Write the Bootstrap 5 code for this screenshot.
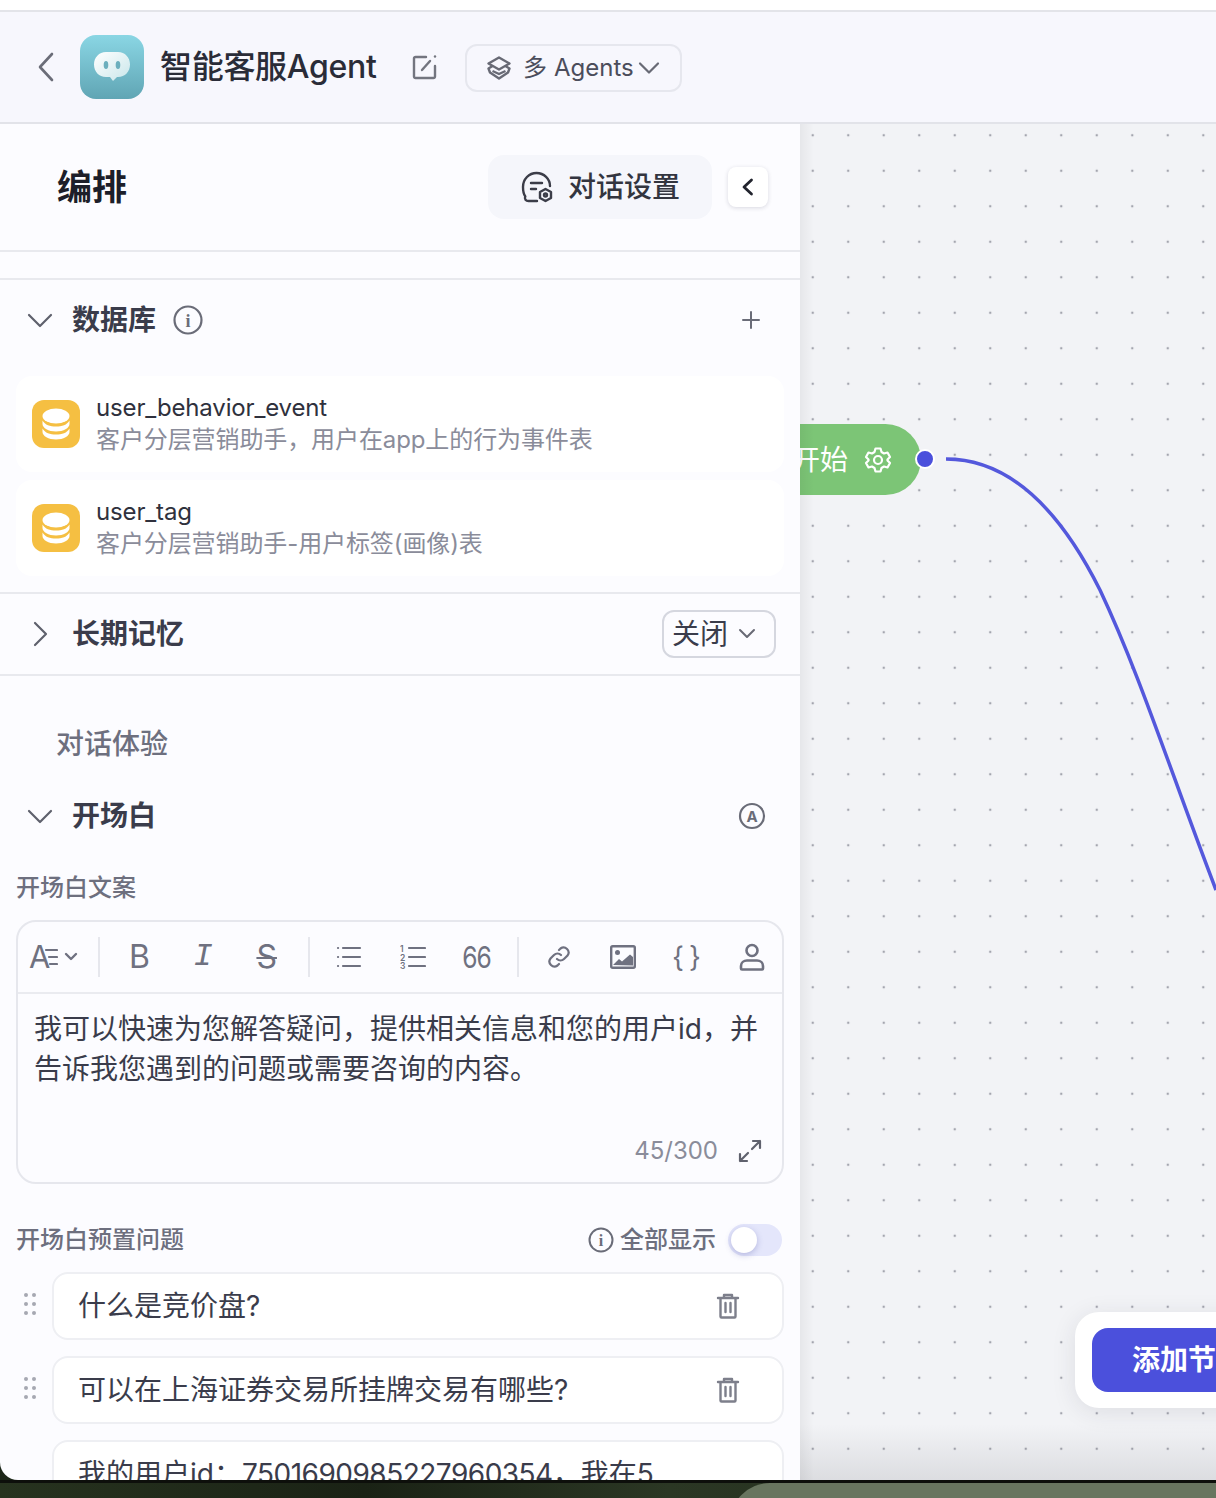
<!DOCTYPE html>
<html lang="zh-CN">

<head>
    <meta charset="UTF-8">
    <meta name="viewport" content="width=device-width, initial-scale=1.0">
    <title>智能客服Agent</title>
    <link href="https://cdn.jsdelivr.net/npm/bootstrap@5.3.0/dist/css/bootstrap.min.css" rel="stylesheet">
    <style>
        body {
            width: 1216px;
            height: 1498px;
            overflow: hidden;
            background: #1c2618;
            font-family: Inter, "Noto Sans CJK SC", sans-serif;
            color: #2c2e3a;
        }

        svg {
            display: block;
            flex: none;
        }

        .top-gap {
            height: 12px;
            background: #fff;
            border-bottom: 2px solid #e3e4e9;
        }

        .app-head {
            height: 112px;
            background: #f7f7fd;
            border-bottom: 2px solid #e2e3e9;
            padding-left: 36px;
        }

        .app-logo {
            width: 64px;
            height: 64px;
            border-radius: 16px;
            background: linear-gradient(#8ad6e4, #60a5b4);
            margin-left: 24px;
        }

        .app-name {
            font-size: 32px;
            font-weight: 500;
            line-height: 40px;
            letter-spacing: -.3px;
            color: #2a2c38;
            margin-left: 16px;
            width: 216px;
            white-space: nowrap;
        }

        .edit-icon {
            margin-left: 35px;
        }

        .mode-btn {
            width: 217px;
            height: 48px;
            border: 2px solid #e6e7ee;
            border-radius: 12px;
            margin: 2px 0 0 26px;
            padding-left: 19px;
            font-size: 24px;
            color: #4b4d5b;
        }

        .mode-one {
            margin-left: 11px;
        }

        .mode-two {
            margin-left: 7px;
        }

        .work-area {
            height: 1356px;
        }

        .side-panel {
            width: 800px;
            background: #fcfcff;
            overflow: hidden;
            border-bottom-left-radius: 18px;
        }

        .panel-head {
            height: 128px;
            border-bottom: 2px solid #e8e9ee;
            padding: 0 32px 0 57px;
            margin-bottom: 26px;
        }

        .panel-title {
            font-size: 35px;
            font-weight: 700;
            color: #1d1f2a;
        }

        .chat-set {
            width: 224px;
            height: 64px;
            border-radius: 16px;
            background: #f5f6fb;
            font-size: 28px;
            font-weight: 500;
            color: #33353f;
            gap: 14px;
        }

        .fold-btn {
            width: 40px;
            height: 40px;
            border-radius: 8px;
            background: #fff;
            box-shadow: 0 1px 4px rgba(30, 32, 60, .16);
            margin-left: 16px;
        }

        .sec-rule {
            border-top: 2px solid #e8e9ee;
        }

        .sec-row {
            height: 80px;
            padding: 0 24px 0 26px;
        }

        .open-row {
            height: 64px;
        }

        .sec-name {
            font-size: 28px;
            font-weight: 600;
            line-height: 40px;
            color: #3a3c4b;
            margin-left: 18px;
        }

        .info-gap {
            margin-left: 17px;
        }

        .plus-end {
            margin-left: auto;
            margin-right: 15px;
        }

        .auto-end {
            margin-left: auto;
            margin-right: 10px;
        }

        .db-list {
            padding: 16px 16px 16px;
        }

        .db-item {
            height: 96px;
            border-radius: 16px;
            background: #fff;
            padding-left: 16px;
            margin-bottom: 8px;
        }

        .db-item:last-child {
            margin-bottom: 0;
        }

        .db-icon {
            width: 48px;
            height: 48px;
            border-radius: 12px;
            background: #f5bf42;
            margin-right: 16px;
        }

        .db-name {
            font-size: 24px;
            line-height: 32px;
            letter-spacing: -.15px;
            color: #2f313d;
        }

        .db-desc {
            font-size: 24px;
            line-height: 32px;
            letter-spacing: -.1px;
            color: #8a8c9a;
        }

        .memory-select {
            width: 114px;
            height: 48px;
            border: 2px solid #d5d7df;
            border-radius: 12px;
            font-size: 28px;
            color: #3a3c4b;
            padding-left: 8px;
            gap: 10px;
        }

        .group-label {
            font-size: 28px;
            font-weight: 500;
            line-height: 40px;
            color: #6d6f7e;
            margin: 48px 0 20px 56px;
        }

        .field-label {
            font-size: 24px;
            font-weight: 500;
            line-height: 32px;
            color: #6d6f7e;
        }

        .label-gap {
            margin-top: 24px;
        }

        .editor-box {
            height: 264px;
            margin: 16px 16px 0;
            border: 2px solid #e6e7ed;
            border-radius: 20px;
        }

        .tool-row {
            height: 72px;
            border-bottom: 2px solid #eaebf0;
            color: #6f7180;
        }

        .tool-btn {
            width: 64px;
            height: 40px;
            font-size: 32px;
            line-height: 40px;
            color: #6f7180;
        }

        .tool-btn.last-tool {
            width: 60px;
            margin-left: 4px;
        }

        .tool-font {
            width: 80px;
            height: 40px;
            padding-left: 11px;
            font-size: 31px;
            line-height: 40px;
        }

        .tool-font svg:first-of-type {
            margin: 0 6px 0 -6px;
        }

        .tool-line {
            width: 2px;
            height: 40px;
            background: #e6e7ed;
            margin: 0 8px 0 9px;
        }

        .tool-line.first-line {
            margin: 0 8px 0 0;
        }

        .italic-glyph {
            font-family: "Liberation Mono", monospace;
            font-style: italic;
        }

        .strike-glyph {
            text-decoration: line-through;
            text-decoration-thickness: 2px;
        }

        .quote-glyph {
            display: inline-block;
            font-size: 30px;
            letter-spacing: -1px;
            transform: scaleX(.82);
        }

        .brace-glyph {
            font-size: 28px;
            letter-spacing: 5px;
            padding-left: 5px;
        }

        .editor-text {
            padding: 15px 16px 0;
            height: 137px;
            font-size: 28px;
            line-height: 40px;
            color: #3a3c4b;
        }

        .editor-foot {
            height: 40px;
            padding-right: 20px;
            font-size: 24px;
            color: #8a8c9a;
            gap: 20px;
        }

        .preset-head {
            height: 32px;
            margin: 40px 18px 0 16px;
        }

        .show-all {
            font-size: 24px;
            font-weight: 500;
            color: #6d6f7e;
            gap: 6px;
        }

        .mini-toggle {
            width: 54px;
            height: 32px;
            border-radius: 16px;
            background: #e4e6fb;
            margin-left: 12px;
            padding-left: 3px;
        }

        .mini-knob {
            width: 26px;
            height: 26px;
            border-radius: 50%;
            background: #fff;
            box-shadow: 0 2px 6px rgba(70, 74, 160, .3);
        }

        .preset-list {
            margin-top: 16px;
            padding: 0 16px;
            gap: 16px;
        }

        .preset-row {
            gap: 8px;
        }

        .drag-dots {
            width: 28px;
            padding-top: 20px;
        }

        .preset-item {
            height: 68px;
            border: 2px solid #eeeff3;
            border-radius: 16px;
            background: #fff;
            padding: 0 42px 0 24px;
            font-size: 28px;
            line-height: 40px;
            color: #3a3c4b;
        }

        .preset-cut {
            height: 100px;
            padding-top: 12px;
            align-items: flex-start !important;
        }

        .id-digits {
            letter-spacing: -.5px;
        }

        .flow-canvas {
            background-color: #f2f3f6;
            background-image: radial-gradient(circle, #a3a5ae 1.2px, transparent 1.6px);
            background-size: 35.5px 35.5px;
            background-position: -5px -6.5px;
            overflow: hidden;
        }

        .canvas-shade {
            background: linear-gradient(90deg, rgba(0, 0, 0, .05), transparent 14px),
                linear-gradient(transparent 1300px, rgba(60, 62, 70, .12));
            pointer-events: none;
        }

        .flow-lines {
            left: 0;
            top: 0;
        }

        .start-node {
            left: -40px;
            top: 300px;
            width: 161px;
            height: 71px;
            border-radius: 0 36px 36px 0;
            background: #7cc576;
            color: #fff;
            font-size: 28px;
            padding-left: 32px;
            gap: 16px;
            white-space: nowrap;
        }

        .dot-port {
            left: 155px;
            top: 25px;
        }

        .add-wrap {
            left: 275px;
            top: 1188px;
            width: 200px;
            height: 96px;
            background: #fff;
            border-radius: 24px;
            box-shadow: 0 4px 24px rgba(40, 42, 60, .1);
            padding: 16px 0 16px 17px;
        }

        .add-btn {
            width: 183px;
            height: 64px;
            border-radius: 16px 0 0 16px;
            background: #4b50dc;
            color: #fff;
            font-size: 28px;
            font-weight: 600;
            padding-left: 40px;
            white-space: nowrap;
        }

        .desk-strip {
            height: 18px;
            border-top: 3px solid #0d0f0b;
            background: linear-gradient(90deg, #27331f, #1a2215 30%, #2b3724 55%, #1d2618);
            overflow: hidden;
        }

        .desk-shape {
            width: 486px;
            height: 60px;
            margin-left: 730px;
            background: #68755f;
            border-radius: 40px 0 0 0;
        }
    </style>
</head>

<body>

    <div class="top-gap"></div>

    <header class="app-head d-flex align-items-center">
        <svg width="20" height="32" viewBox="0 0 20 32" fill="none" stroke="#6b6d78" stroke-width="2.6" stroke-linecap="round" stroke-linejoin="round"><path d="M16 3 4 16l12 13" /></svg>
        <div class="app-logo d-flex align-items-center justify-content-center">
            <svg width="40" height="36" viewBox="0 0 40 36">
                <defs>
                    <linearGradient id="bubble" x1="0" y1="0" x2="1" y2="1">
                        <stop offset="0" stop-color="#ffffff" />
                        <stop offset="1" stop-color="#c8e6ea" />
                    </linearGradient>
                </defs>
                <path d="M14 3h12c7 0 12 5.5 12 12.5S33 28 26 28h-1l-4 4-3-4h-4C7 28 2 22.5 2 15.5S7 3 14 3z" fill="url(#bubble)" />
                <ellipse cx="14" cy="16" rx="2.3" ry="4" fill="#6bafbd" />
                <ellipse cx="26" cy="16" rx="2.3" ry="4" fill="#6bafbd" />
            </svg>
        </div>
        <div class="app-name">智能客服Agent</div>
        <svg class="edit-icon" width="28" height="28" viewBox="0 0 28 28" fill="none" stroke="#73757f" stroke-width="2.4" stroke-linecap="round" stroke-linejoin="round"><path d="M15 4H4.500A1.500 1.500 0 0 0 3 5.500v18A1.500 1.500 0 0 0 4.500 25h18a1.500 1.500 0 0 0 1.500-1.500V13" /><path d="m11 17 8-9" /><path d="M24 3.500v.1" /></svg>
        <div class="mode-btn d-flex align-items-center">
            <svg width="26" height="26" viewBox="0 0 26 26" fill="none" stroke="#686a75" stroke-width="2.4" stroke-linejoin="round"><path d="M13 2.500 23.500 8.500 13 14.500 2.500 8.500z" /><path d="M6.500 11 2.500 13.500 4 17.500 13 23.500 22 17.500 23.500 13.500 19.500 11" /><path d="M6.500 16 13 19 19.500 16" /></svg>
            <span class="mode-one">多</span>
            <span class="mode-two">Agents</span>
            <svg class="ms-1" width="22" height="14" viewBox="0 0 22 14" fill="none" stroke="#686a75" stroke-width="2.2" stroke-linecap="round" stroke-linejoin="round"><path d="m2 2.500 9 9 9-9" /></svg>
        </div>
    </header>

    <div class="work-area d-flex">
        <aside class="side-panel">
            <div class="panel-head d-flex align-items-center">
                <div class="panel-title me-auto">编排</div>
                <div class="chat-set d-flex align-items-center justify-content-center">
                    <svg width="34" height="34" viewBox="0 0 34 34" fill="none" stroke="#3b3d48" stroke-width="2.4" stroke-linecap="round" stroke-linejoin="round"><path d="M17 31H8.500C6 31 4 29 5.300 26.500 3.500 24 3 21 3 17 3 9 9 3 16.500 3S30 9 30 16" /><path d="M11 13h11M11 19h5" /><path d="m25.500 19 5.500 3v6l-5.500 3-5.500-3v-6z" /><circle cx="25.500" cy="25" r="1.500" /></svg>
                    <span>对话设置</span>
                </div>
                <div class="fold-btn d-flex align-items-center justify-content-center">
                    <svg width="16" height="20" viewBox="0 0 16 20" fill="none" stroke="#22242e" stroke-width="2.8" stroke-linecap="round" stroke-linejoin="round"><path d="M11.500 3 4 10l7.500 7" /></svg>
                </div>
            </div>

            <section class="sec-rule">
                <div class="sec-row d-flex align-items-center">
                    <svg width="28" height="16" viewBox="0 0 28 16" fill="none" stroke="#5f616d" stroke-width="2.2" stroke-linecap="round" stroke-linejoin="round"><path d="m3 3 11 11L25 3" /></svg>
                    <span class="sec-name">数据库</span>
                    <svg class="info-gap" width="30" height="30" viewBox="0 0 30 30" fill="none" stroke="#6a6c78" stroke-width="2.2"><circle cx="15" cy="15" r="13.500" /><text x="15" y="21.500" text-anchor="middle" font-family="Liberation Serif, serif" font-size="18" font-weight="700" fill="#6a6c78" stroke="none">i</text></svg>
                    <svg class="plus-end" width="20" height="20" viewBox="0 0 20 20" fill="none" stroke="#6a6c78" stroke-width="2" stroke-linecap="round"><path d="M10 2v16M2 10h16" /></svg>
                </div>
                <div class="db-list">
                    <div class="db-item d-flex align-items-center">
                        <div class="db-icon d-flex align-items-center justify-content-center">
                            <svg width="30" height="32" viewBox="0 0 30 32" fill="#fff"><ellipse cx="15" cy="8" rx="13.500" ry="7.500" /><path d="M1.500 12.500C4 17 9 18.500 15 18.500s11-1.500 13.500-6v3.500c0 4-6 7.500-13.500 7.500S1.500 20 1.500 16z" /><path d="M1.500 20.500C4 25 9 26.500 15 26.500s11-1.500 13.500-6V24c0 4-6 7.500-13.500 7.500S1.500 28 1.500 24z" /></svg>
                        </div>
                        <div>
                            <div class="db-name">user_behavior_event</div>
                            <div class="db-desc">客户分层营销助手，用户在app上的行为事件表</div>
                        </div>
                    </div>
                    <div class="db-item d-flex align-items-center">
                        <div class="db-icon d-flex align-items-center justify-content-center">
                            <svg width="30" height="32" viewBox="0 0 30 32" fill="#fff"><ellipse cx="15" cy="8" rx="13.500" ry="7.500" /><path d="M1.500 12.500C4 17 9 18.500 15 18.500s11-1.500 13.500-6v3.500c0 4-6 7.500-13.500 7.500S1.500 20 1.500 16z" /><path d="M1.500 20.500C4 25 9 26.500 15 26.500s11-1.500 13.500-6V24c0 4-6 7.500-13.500 7.500S1.500 28 1.500 24z" /></svg>
                        </div>
                        <div>
                            <div class="db-name">user_tag</div>
                            <div class="db-desc">客户分层营销助手-用户标签(画像)表</div>
                        </div>
                    </div>
                </div>
            </section>

            <section class="sec-rule">
                <div class="sec-row d-flex align-items-center">
                    <svg width="28" height="28" viewBox="0 0 28 28" fill="none" stroke="#5f616d" stroke-width="2.2" stroke-linecap="round" stroke-linejoin="round"><path d="m9 3 11 11L9 25" /></svg>
                    <span class="sec-name">长期记忆</span>
                    <div class="memory-select d-flex align-items-center ms-auto">
                        <span>关闭</span>
                        <svg width="18" height="12" viewBox="0 0 18 12" fill="none" stroke="#686a75" stroke-width="2" stroke-linecap="round" stroke-linejoin="round"><path d="m2 2 7 7 7-7" /></svg>
                    </div>
                </div>
            </section>

            <section class="sec-rule">
                <div class="group-label">对话体验</div>
                <div class="d-flex align-items-center sec-row open-row">
                    <svg width="28" height="16" viewBox="0 0 28 16" fill="none" stroke="#5f616d" stroke-width="2.2" stroke-linecap="round" stroke-linejoin="round"><path d="m3 3 11 11L25 3" /></svg>
                    <span class="sec-name">开场白</span>
                    <svg class="auto-end" width="28" height="28" viewBox="0 0 28 28" fill="none" stroke="#6a6c78" stroke-width="2.2"><circle cx="14" cy="14" r="12" /><text x="14" y="19.500" text-anchor="middle" font-family="Inter, sans-serif" font-size="15" font-weight="700" fill="#6a6c78" stroke="none">A</text></svg>
                </div>
                <div class="field-label mx-3 label-gap">开场白文案</div>

                <div class="editor-box">
                    <div class="tool-row d-flex align-items-center">
                        <div class="tool-font d-flex align-items-center">
                            <span>A</span>
                            <svg width="14" height="24" viewBox="0 0 14 24" fill="none" stroke="#6f7180" stroke-width="2.2" stroke-linecap="round"><path d="M2 5h11M5 12h8M6 19h7" /></svg>
                            <svg width="14" height="10" viewBox="0 0 14 10" fill="none" stroke="#6f7180" stroke-width="2.4" stroke-linecap="round" stroke-linejoin="round"><path d="m2 2 5 5 5-5" /></svg>
                        </div>
                        <div class="tool-line first-line"></div>
                        <div class="tool-btn text-center">B</div>
                        <div class="tool-btn text-center italic-glyph">I</div>
                        <div class="tool-btn text-center strike-glyph">S</div>
                        <div class="tool-line"></div>
                        <div class="tool-btn d-flex align-items-center justify-content-center">
                            <svg width="26" height="24" viewBox="0 0 26 24" fill="none" stroke="#6f7180" stroke-width="2.2" stroke-linecap="round"><path d="M7 3h17M7 12h17M7 21h17M2 3h.1M2 12h.1M2 21h.1" /></svg>
                        </div>
                        <div class="tool-btn d-flex align-items-center justify-content-center">
                            <svg width="26" height="26" viewBox="0 0 26 26" fill="none" stroke="#6f7180" stroke-width="2.2" stroke-linecap="round"><path d="M9 4h16M9 13h16M9 22h16" /><text x="0" y="8" font-family="Inter, sans-serif" font-size="8.5" font-weight="600" fill="#6f7180" stroke="none">1</text><text x="0" y="16.5" font-family="Inter, sans-serif" font-size="8.5" font-weight="600" fill="#6f7180" stroke="none">2</text><text x="0" y="25" font-family="Inter, sans-serif" font-size="8.5" font-weight="600" fill="#6f7180" stroke="none">3</text></svg>
                        </div>
                        <div class="tool-btn text-center"><span class="quote-glyph">66</span></div>
                        <div class="tool-line"></div>
                        <div class="tool-btn d-flex align-items-center justify-content-center">
                            <svg width="24" height="24" viewBox="0 0 24 24" fill="none" stroke="#6f7180" stroke-width="2.2" stroke-linecap="round"><path d="M10 14a5 5 0 0 0 7 0l3.500-3.500a5 5 0 0 0-7-7L12 5" /><path d="M14 10a5 5 0 0 0-7 0l-3.500 3.500a5 5 0 0 0 7 7L12 19" /></svg>
                        </div>
                        <div class="tool-btn d-flex align-items-center justify-content-center">
                            <svg width="26" height="24" viewBox="0 0 26 24"><rect x="1.2" y="1.2" width="23.6" height="21.6" rx="1.5" fill="none" stroke="#6f7180" stroke-width="2.4" /><circle cx="7.5" cy="7.5" r="2.5" fill="#6f7180" /><path d="M3 20l6-6 3 2.500L20 9.500 23 12v8.500z" fill="#6f7180" /></svg>
                        </div>
                        <div class="tool-btn text-center brace-glyph">{}</div>
                        <div class="tool-btn last-tool d-flex align-items-center justify-content-center">
                            <svg width="26" height="28" viewBox="0 0 26 28" fill="none" stroke="#6f7180" stroke-width="2.6"><circle cx="13" cy="7.500" r="5.500" /><path d="M2 25.500V23c0-3.500 3-5.500 6-5.500h10c3 0 6 2 6 5.500v2.500c0 .5-.5 1-1 1H3c-.5 0-1-.5-1-1z" /></svg>
                        </div>
                    </div>
                    <div class="editor-text">我可以快速为您解答疑问，提供相关信息和您的用户id，并告诉我您遇到的问题或需要咨询的内容。</div>
                    <div class="editor-foot d-flex align-items-center justify-content-end">
                        <span>45/300</span>
                        <svg width="24" height="24" viewBox="0 0 24 24" fill="none" stroke="#5f616d" stroke-width="2.2" stroke-linecap="round" stroke-linejoin="round"><path d="M14 10l8-8M15 2h7v7M10 14l-8 8M2 15v7h7" /></svg>
                    </div>
                </div>

                <div class="preset-head d-flex align-items-center justify-content-between">
                    <div class="field-label">开场白预置问题</div>
                    <div class="d-flex align-items-center">
                        <div class="show-all d-flex align-items-center">
                            <svg width="26" height="26" viewBox="0 0 26 26" fill="none" stroke="#6a6c78" stroke-width="2"><circle cx="13" cy="13" r="11.500" /><text x="13" y="19" text-anchor="middle" font-family="Liberation Serif, serif" font-size="16" font-weight="700" fill="#6a6c78" stroke="none">i</text></svg>
                            <span>全部显示</span>
                        </div>
                        <div class="mini-toggle d-flex align-items-center">
                            <div class="mini-knob"></div>
                        </div>
                    </div>
                </div>

                <div class="preset-list d-flex flex-column" id="presets"></div>
            </section>
        </aside>

        <main class="flow-canvas flex-grow-1 position-relative">
            <svg class="flow-lines position-absolute" width="416" height="1356" viewBox="800 124 416 1356" fill="none"><path d="M946 459C1010 459 1060 510 1100 590 1140 675 1170 770 1216 890" stroke="#5458dc" stroke-width="3.5" /></svg>
            <div class="start-node position-absolute d-flex align-items-center">
                <span>开始</span>
                <svg width="28" height="28" viewBox="0 0 28 28" fill="none" stroke="#fff" stroke-width="2.2" stroke-linejoin="round"><path d="M11.500 2.500h5l1 3.500 2.500 1.500 3.500-1 2.500 4.500-2.500 2.500v1l2.500 2.500-2.500 4.500-3.500-1-2.500 1.500-1 3.500h-5l-1-3.500L8 20.500l-3.500 1L2 17l2.500-2.500v-1L2 11l2.500-4.500 3.500 1L10.500 6z" /><circle cx="14" cy="14" r="4" /></svg>
                <svg class="position-absolute dot-port" width="20" height="20" viewBox="0 0 20 20"><circle cx="10" cy="10" r="9" fill="#4b50dc" stroke="#fff" stroke-width="2" /></svg>
            </div>
            <div class="add-wrap position-absolute">
                <div class="add-btn d-flex align-items-center">添加节点</div>
            </div>
            <div class="canvas-shade position-absolute top-0 start-0 w-100 h-100"></div>
        </main>
    </div>

    <div class="desk-strip">
        <div class="desk-shape"></div>
    </div>

    <script src="https://cdn.jsdelivr.net/npm/bootstrap@5.3.0/dist/js/bootstrap.bundle.min.js"></script>
    <script>
        const presets = ["什么是竞价盘?", "可以在上海证券交易所挂牌交易有哪些?", '我的用户id：<span class="id-digits">7501690985227960354</span>，我在5'];
        const dots = '<svg width="14" height="24" viewBox="0 0 14 24" fill="#a6a8b2"><circle cx="3" cy="3" r="2"/><circle cx="11" cy="3" r="2"/><circle cx="3" cy="12" r="2"/><circle cx="11" cy="12" r="2"/><circle cx="3" cy="21" r="2"/><circle cx="11" cy="21" r="2"/></svg>';
        const trash = '<svg class="ms-auto" width="24" height="26" viewBox="0 0 24 26" fill="none" stroke="#7d7f8b" stroke-width="2.4" stroke-linecap="round" stroke-linejoin="round"><path d="M2 5h20M8 5V2h8v3M4.500 5v18.500a1 1 0 0 0 1 1h13a1 1 0 0 0 1-1V5M9.500 10v9M14.500 10v9"/></svg>';

        const box = document.getElementById("presets");
        presets.forEach((text, i) => {
            const cut = i === presets.length - 1;
            box.innerHTML += `<div class="preset-row d-flex">
                <div class="drag-dots d-flex justify-content-center align-items-start">${cut ? "" : dots}</div>
                <div class="preset-item d-flex align-items-center flex-grow-1 ${cut ? "preset-cut" : ""}"><span>${text}</span>${cut ? "" : trash}</div>
            </div>`;
        });
    </script>

</body>

</html>
